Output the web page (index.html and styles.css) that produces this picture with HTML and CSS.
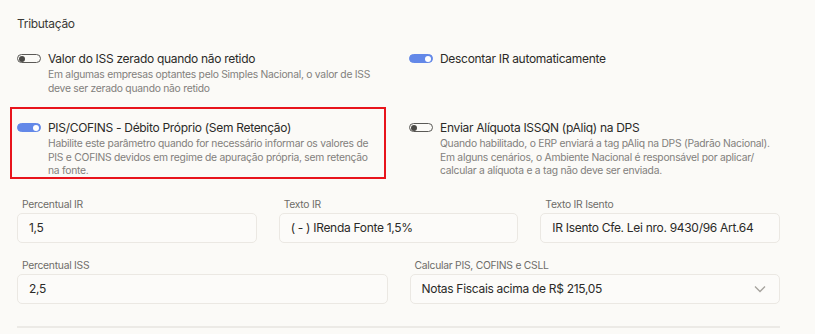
FILE: index.html
```html
<!DOCTYPE html>
<html lang="pt-BR">
<head>
    <meta charset="utf-8" />
    <link rel="stylesheet" href="styles.css">
    <title>Tributação</title>
</head>
<body>

<section class="panel">
    <h2 class="panel-title">Tributação</h2>

    <!-- switches -->
    <div class="switch-grid">
        <div class="switch-item">
            <span class="toggle"></span>
            <div class="switch-text">
                <div class="switch-label">Valor do ISS zerado quando não retido</div>
                <div class="switch-desc">Em algumas empresas optantes pelo Simples Nacional, o valor de ISS deve ser zerado quando não retido</div>
            </div>
        </div>
        <div class="switch-item">
            <span class="toggle on"></span>
            <div class="switch-text">
                <div class="switch-label">Descontar IR automaticamente</div>
            </div>
        </div>
        <div class="switch-item highlight">
            <span class="toggle on"></span>
            <div class="switch-text">
                <div class="switch-label">PIS/COFINS - Débito Próprio (Sem Retenção)</div>
                <div class="switch-desc">Habilite este parâmetro quando for necessário informar os valores de PIS e COFINS devidos em regime de apuração própria, sem retenção na fonte.</div>
            </div>
        </div>
        <div class="switch-item">
            <span class="toggle"></span>
            <div class="switch-text">
                <div class="switch-label">Enviar Alíquota ISSQN (pAliq) na DPS</div>
                <div class="switch-desc">Quando habilitado, o ERP enviará a tag pAliq na DPS (Padrão Nacional). Em alguns cenários, o Ambiente Nacional é responsável por aplicar/ calcular a alíquota e a tag não deve ser enviada.</div>
            </div>
        </div>
    </div>

    <!-- fields -->
    <div class="field-row three">
        <label class="field">
            <span class="field-label">Percentual IR</span>
            <span class="input">1,5</span>
        </label>
        <label class="field">
            <span class="field-label">Texto IR</span>
            <span class="input">( - ) IRenda Fonte 1,5%</span>
        </label>
        <label class="field">
            <span class="field-label">Texto IR Isento</span>
            <span class="input">IR Isento Cfe. Lei nro. 9430/96 Art.64</span>
        </label>
    </div>

    <div class="field-row two">
        <label class="field">
            <span class="field-label">Percentual ISS</span>
            <span class="input">2,5</span>
        </label>
        <label class="field">
            <span class="field-label">Calcular PIS, COFINS e CSLL</span>
            <span class="input select">
                Notas Fiscais acima de R$ 215,05
                <svg class="chevron" width="12" height="8" viewBox="0 0 12 8"><path d="M1 1.5l5 5 5-5" fill="none" stroke="#a5a29d" stroke-width="1.3"/></svg>
            </span>
        </label>
    </div>

    <div class="divider"></div>
</section>

</body>
</html>
```

FILE: styles.css
```css
body {
    margin: 0;
    background: #fbfaf7;
    font-family: 'Inter', 'Noto Sans', sans-serif;
    color: #2b2a28;
}

.panel {
    padding: 15px 35px 0 17px;
}

.panel-title {
    margin: 0;
    font-size: 12px;
    font-weight: 400;
    line-height: 18px;
    letter-spacing: -0.3px;
    color: #3a3936;
}

/* Switch grid */
.switch-grid {
    display: grid;
    grid-template-columns: 362px 1fr;
    column-gap: 30px;
    row-gap: 24px;
    margin-top: 17px;
}

.switch-item {
    position: relative;
    display: flex;
    gap: 7px;
}

/* red marker drawn round the selected option */
.switch-item.highlight::before {
    content: "";
    position: absolute;
    top: -12px;
    bottom: -1px;
    left: -7px;
    right: -7px;
    border: 2px solid #e8141c;
}

.toggle {
    position: relative;
    flex: none;
    width: 22px;
    height: 7px;
    margin-top: 4px;
    border: 1px solid #5a5956;
    border-radius: 6px;
    background: #fbfaf7;
}

.toggle::after {
    content: "";
    position: absolute;
    left: 1px;
    top: 0.5px;
    width: 6px;
    height: 6px;
    border-radius: 50%;
    background: #4a4946;
}

.toggle.on {
    background: #6388e8;
    border-color: #6388e8;
}

.toggle.on::after {
    left: auto;
    right: 1px;
    background: #fff;
}

.switch-label {
    font-size: 12px;
    line-height: 17px;
    letter-spacing: -0.3px;
    color: #2b2a28;
}

.switch-desc {
    margin-top: 1px;
    font-size: 10.3px;
    line-height: 13.5px;
    letter-spacing: -0.25px;
    color: #82807c;
}

/* Fields */
.field-row {
    display: grid;
    gap: 22px;
}

.field-row.three {
    grid-template-columns: 1fr 1fr 1fr;
    margin-top: 19px;
}

.field-row.two {
    grid-template-columns: 1fr 1fr;
    margin-top: 15px;
}

.field {
    display: flex;
    flex-direction: column;
}

.field-label {
    padding-left: 5px;
    font-size: 10.3px;
    line-height: 14px;
    letter-spacing: -0.25px;
    color: #6e6c68;
}

.input {
    display: flex;
    align-items: center;
    height: 28px;
    margin-top: 2px;
    padding: 0 11px;
    border: 1px solid #ebe8e3;
    border-radius: 5px;
    background: #fcfbf9;
    font-size: 12px;
    letter-spacing: -0.3px;
    white-space: nowrap;
    color: #2b2a28;
}

.input.select {
    justify-content: space-between;
}

.chevron {
    margin-right: 2px;
}

.divider {
    height: 2px;
    margin-top: 22px;
    background: #eceae6;
}
```
